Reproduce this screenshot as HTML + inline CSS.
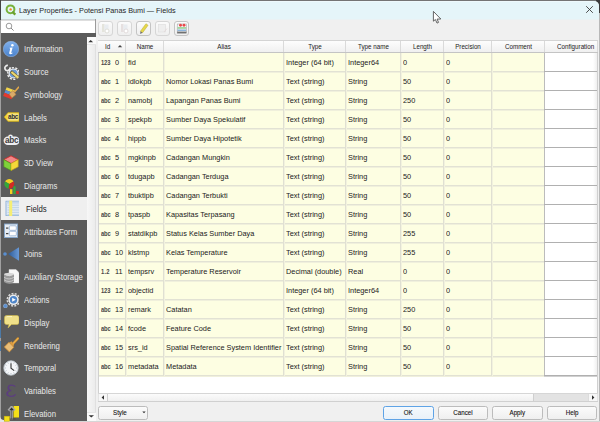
<!DOCTYPE html><html><head><meta charset="utf-8"><style>
*{margin:0;padding:0;box-sizing:border-box}
html,body{width:600px;height:422px;overflow:hidden;background:#3c3c3c;font-family:"Liberation Sans",sans-serif;}
.a{position:absolute}
.t{position:absolute;white-space:nowrap;font-size:7.4px;color:#1a1a1a;line-height:10px}
</style></head><body>

<div class="a" style="left:1px;top:1px;width:598px;height:421px;background:#f0f0f0;border-top-right-radius:5px;overflow:hidden">
</div>
<div class="a" style="left:1px;top:1px;width:598px;height:18px;background:#e5f5f9;border-top-right-radius:5px;border-top-left-radius:2px"></div>
<div class="t" style="left:19px;top:5.8px;font-size:7.9px;color:#262626;transform:scaleX(0.925);transform-origin:0 0">Layer Properties - Potensi Panas Bumi — Fields</div>
<div class="a" style="left:0px;top:0px;width:596px;height:1px;background:#747474"></div>
<div class="a" style="left:0px;top:0px;width:1px;height:20px;background:#444"></div>
<div class="a" style="left:2px;top:1px;width:592px;height:1px;background:#eef9fc"></div>
<div class="a" style="left:599px;top:13px;width:1px;height:409px;background:#b8b8b8"></div>
<div class="a" style="left:0px;top:20px;width:1px;height:402px;background:#a0a0a0"></div>
<div class="a" style="left:0px;top:320px;width:1px;height:18px;background:#4b79a6"></div>
<div class="a" style="left:0px;top:341px;width:1px;height:10px;background:#4b79a6"></div>
<svg class="a" style="left:585px;top:5px" width="9" height="9"><path d="M1.2 1.2L7.8 7.8M7.8 1.2L1.2 7.8" stroke="#3a3a3a" stroke-width="0.9"/></svg>
<svg class="a" style="left:5px;top:4px" width="12" height="12"><circle cx="5.5" cy="5.3" r="3.9" fill="none" stroke="#78b23c" stroke-width="2"/><path d="M7.3 7.6L10.3 10.6" stroke="#6aa02f" stroke-width="2.2"/><circle cx="5.6" cy="5.4" r="1.2" fill="#f08a24"/></svg>
<div class="a" style="left:96px;top:19px;width:503px;height:1px;background:#eaf2f4"></div>
<div class="a" style="left:1px;top:19px;width:95px;height:1px;background:#cdd3d6"></div>
<div class="a" style="left:1px;top:20px;width:95px;height:1px;background:#dedede"></div>
<div class="a" style="left:1px;top:21px;width:94px;height:12px;background:#fff"></div>
<div class="a" style="left:95px;top:19px;width:1px;height:14px;background:#9a9a9a"></div>
<svg class="a" style="left:5px;top:22px" width="10" height="10"><circle cx="4" cy="4" r="2.8" fill="none" stroke="#8a8a8a" stroke-width="0.85"/><path d="M6 6L8.6 8.6" stroke="#8a8a8a" stroke-width="1"/></svg>
<div class="a" style="left:1px;top:33px;width:94.5px;height:389px;background:#5b5b5b"></div>
<div class="a" style="left:87px;top:37px;width:9px;height:385px;background:linear-gradient(90deg,#f7f7f7,#ececec);border-right:1px solid #e0e0e0"></div>
<div class="a" style="left:87px;top:37px;width:8.5px;height:8px;background:#fafafa;border-bottom:1px solid #e6e6e6"></div>
<svg class="a" style="left:87px;top:38px" width="8" height="6"><path d="M1.3 4.2L3.7 2L6.1 4.2Z" fill="#333"/></svg>
<div class="a" style="left:87px;top:412px;width:8.5px;height:9px;background:#fafafa;border-top:1px solid #e6e6e6"></div>
<svg class="a" style="left:87px;top:414px" width="8" height="5"><path d="M1.6 1.2L4.3 3.4L7 1.2Z" fill="#333"/></svg>
<div class="a" style="left:0px;top:421px;width:600px;height:1px;background:#d6d6d6"></div>
<div class="a" style="left:0px;top:416px;width:4px;height:6px;background:radial-gradient(circle at 100% 0%, transparent 3.5px, #e4e4e4 4.5px)"></div>
<svg class="a" style="left:3px;top:40.8px" width="16" height="16" viewBox="0 0 16 16"><defs><linearGradient id="gi" x1="0" y1="0" x2="0" y2="1"><stop offset="0" stop-color="#80b0ec"/><stop offset="1" stop-color="#4a82cc"/></linearGradient></defs>
<circle cx="8" cy="8" r="7.7" fill="url(#gi)" stroke="#9cc0ee" stroke-width="0.5"/>
<circle cx="9.4" cy="4.2" r="1.25" fill="#fff"/>
<path d="M6.4 6.8L9.6 6.4L8.3 11.5Q8.2 12 8.8 11.9L9.6 11.5L9.4 12.4Q8.1 13.3 6.9 13.1Q5.9 12.8 6.2 11.7L7.2 8Z" fill="#fff"/></svg>
<div class="t" style="left:24px;top:45.2px;color:#e8e8e8;font-size:8.2px;transform:scaleX(0.95);transform-origin:0 0">Information</div>
<svg class="a" style="left:3px;top:63.6px" width="16" height="16" viewBox="0 0 16 16"><path d="M4.9 1.5A2.6 2.6 0 1 0 6.9 3.2" fill="none" stroke="#ececec" stroke-width="1.7"/>
<path d="M6.3 5.9L8.2 7.8" stroke="#ececec" stroke-width="1.8"/>
<circle cx="10.6" cy="9.5" r="5.9" fill="none" stroke="#f0f0f0" stroke-width="1.4" stroke-dasharray="2.2 1.4"/>
<circle cx="10.6" cy="9.5" r="5.1" fill="#f2f2f2"/>
<circle cx="10.6" cy="9.5" r="3.9" fill="#6a9ad4"/>
<path d="M7.8 7.5L15.2 13.7" stroke="#6a5a30" stroke-width="3.2"/>
<path d="M8.4 8L15.2 13.7" stroke="#ecd870" stroke-width="2.2"/></svg>
<div class="t" style="left:24px;top:68.0px;color:#e8e8e8;font-size:8.2px;transform:scaleX(0.95);transform-origin:0 0">Source</div>
<svg class="a" style="left:3px;top:86.4px" width="16" height="16" viewBox="0 0 16 16"><g transform="rotate(22 7 9)"><rect x="1" y="3" width="9" height="3" fill="#f1d44a"/><rect x="1" y="6" width="9" height="3" fill="#5a8fd0"/><rect x="1" y="9" width="9" height="3.5" fill="#e23a2e"/></g>
<path d="M6 8L10 4.5L13 8.5L9 12Z" fill="#d9aa6a" stroke="#b07a3a" stroke-width="0.6"/>
<path d="M11.5 6L16 0.8" stroke="#e3a84a" stroke-width="1.6"/></svg>
<div class="t" style="left:24px;top:90.8px;color:#e8e8e8;font-size:8.2px;transform:scaleX(0.95);transform-origin:0 0">Symbology</div>
<svg class="a" style="left:3px;top:109.2px" width="16" height="16" viewBox="0 0 16 16"><path d="M5 3.6H15.6Q16.3 3.6 16.3 4.3V11.7Q16.3 12.4 15.6 12.4H5L1.2 8Z" fill="#f3d437" stroke="#c9a818" stroke-width="0.6"/>
<rect x="4.6" y="4.6" width="10.8" height="6.8" rx="1" fill="#f2e286"/>
<text x="10.1" y="10.4" font-family="Liberation Sans" font-size="6.4" font-weight="bold" fill="#2e2e2e" text-anchor="middle" letter-spacing="-0.35">abc</text></svg>
<div class="t" style="left:24px;top:113.6px;color:#e8e8e8;font-size:8.2px;transform:scaleX(0.95);transform-origin:0 0">Labels</div>
<svg class="a" style="left:3px;top:132.0px" width="16" height="16" viewBox="0 0 16 16"><rect x="0.6" y="4.6" width="16" height="8.4" rx="4.2" fill="#ededf1"/>
<rect x="5.2" y="2.4" width="4.6" height="5" rx="2.3" fill="#ededf1"/>
<text x="8.6" y="11.3" font-family="Liberation Sans" font-size="8.2" font-weight="bold" fill="#3e3e3e" text-anchor="middle" letter-spacing="-0.3">abc</text></svg>
<div class="t" style="left:24px;top:136.4px;color:#e8e8e8;font-size:8.2px;transform:scaleX(0.95);transform-origin:0 0">Masks</div>
<svg class="a" style="left:3px;top:154.8px" width="16" height="16" viewBox="0 0 16 16"><path d="M8 0.8L15.2 4.6L8 8.6L0.8 4.6Z" fill="#f28888" stroke="#c92a2a" stroke-width="0.9"/>
<path d="M0.8 4.6L8 8.6V15.6L0.8 11.8Z" fill="#7ed23a" stroke="#4a8e1a" stroke-width="0.6"/>
<path d="M15.2 4.6L8 8.6V15.6L15.2 11.8Z" fill="#f4d83a" stroke="#c9a818" stroke-width="0.6"/></svg>
<div class="t" style="left:24px;top:159.2px;color:#e8e8e8;font-size:8.2px;transform:scaleX(0.95);transform-origin:0 0">3D View</div>
<svg class="a" style="left:3px;top:177.6px" width="16" height="16" viewBox="0 0 16 16"><path d="M6.3 5.9L2.06 3.45A4.9 4.9 0 0 1 10.54 3.45Z" fill="#f2cf22"/><path d="M6.3 5.9L10.54 3.45A4.9 4.9 0 0 1 5.45 10.73Z" fill="#d42a22"/><path d="M6.3 5.9L5.45 10.73A4.9 4.9 0 0 1 2.06 3.45Z" fill="#35a83a"/>
<rect x="7" y="11.2" width="2.4" height="6" fill="#f2cf22"/>
<rect x="10.4" y="8.3" width="2.2" height="8.9" fill="#35a83a"/>
<rect x="13.2" y="13" width="2.6" height="4.2" fill="#d42a22"/></svg>
<div class="t" style="left:24px;top:182.0px;color:#e8e8e8;font-size:8.2px;transform:scaleX(0.95);transform-origin:0 0">Diagrams</div>
<div class="a" style="left:1px;top:197.0px;width:86px;height:22.8px;background:#efefef"></div>
<svg class="a" style="left:3px;top:200.4px" width="16" height="16" viewBox="0 0 16 16"><rect x="3" y="1.2" width="15" height="14.6" fill="#dfe9f5" stroke="#7fa6d2" stroke-width="0.8"/>
<rect x="3.4" y="1.6" width="14.2" height="2" fill="#c4d6ec"/>
<path d="M4.5 5.2H17M4.5 7.6H17M4.5 10H17M4.5 12.4H17M4.5 14.6H17" stroke="#aac2de" stroke-width="0.6"/>
<rect x="6.2" y="0.6" width="3" height="15.6" fill="#f6ee74"/></svg>
<div class="t" style="left:26px;top:204.8px;color:#222;font-size:8.2px;transform:scaleX(0.95);transform-origin:0 0">Fields</div>
<svg class="a" style="left:3px;top:223.2px" width="16" height="16" viewBox="0 0 16 16"><rect x="1.5" y="1" width="13" height="13.5" fill="#e8edf3" stroke="#86a8cf" stroke-width="0.9"/>
<rect x="3" y="4.5" width="2.4" height="1.2" fill="#444"/><rect x="3" y="10" width="2.4" height="1.2" fill="#444"/>
<rect x="6.3" y="2.8" width="7" height="4.5" rx="1" fill="#fff" stroke="#86a8cf" stroke-width="0.7"/>
<rect x="6.3" y="8.3" width="7" height="4.5" rx="1" fill="#fff" stroke="#86a8cf" stroke-width="0.7"/></svg>
<div class="t" style="left:24px;top:227.6px;color:#e8e8e8;font-size:8.2px;transform:scaleX(0.95);transform-origin:0 0">Attributes Form</div>
<svg class="a" style="left:3px;top:246.0px" width="16" height="16" viewBox="0 0 16 16"><defs><linearGradient id="gj" x1="0" y1="0" x2="1" y2="0"><stop offset="0" stop-color="#2c5a98"/><stop offset="1" stop-color="#6c9cd8"/></linearGradient></defs>
<path d="M5 8L16.5 1V15Z" fill="url(#gj)"/><circle cx="2" cy="8" r="1.8" fill="#5a8fd0"/></svg>
<div class="t" style="left:24px;top:250.4px;color:#e8e8e8;font-size:8.2px;transform:scaleX(0.95);transform-origin:0 0">Joins</div>
<svg class="a" style="left:3px;top:268.8px" width="16" height="16" viewBox="0 0 16 16"><path d="M6 0.5H13L16 3.5V14H6Z" fill="#f8f8f8" stroke="#ddd" stroke-width="0.4"/>
<ellipse cx="6" cy="5.5" rx="5" ry="1.8" fill="#d8d8d8"/>
<path d="M1 5.5V13Q6 16.5 11 13V5.5Q6 9 1 5.5Z" fill="#9a9a9a"/>
<path d="M1 8.3Q6 11.6 11 8.3M1 10.8Q6 14.2 11 10.8" fill="none" stroke="#d2d2d2" stroke-width="0.8"/></svg>
<div class="t" style="left:24px;top:273.2px;color:#e8e8e8;font-size:8.2px;transform:scaleX(0.95);transform-origin:0 0">Auxiliary Storage</div>
<svg class="a" style="left:3px;top:291.6px" width="16" height="16" viewBox="0 0 16 16"><circle cx="10.5" cy="7.8" r="6.2" fill="none" stroke="#d8d8d8" stroke-width="1.6" stroke-dasharray="2 1.3"/>
<circle cx="10.5" cy="7.8" r="5.2" fill="#eeeeee"/>
<circle cx="10.5" cy="7.8" r="3.7" fill="#4f86c9"/>
<path d="M9.2 5.8L12.7 7.8L9.2 9.8Z" fill="#fff"/>
<circle cx="2.4" cy="14" r="2" fill="#5a8fd0" stroke="#a8c0e0" stroke-width="0.5"/></svg>
<div class="t" style="left:24px;top:296.0px;color:#e8e8e8;font-size:8.2px;transform:scaleX(0.95);transform-origin:0 0">Actions</div>
<svg class="a" style="left:3px;top:314.4px" width="16" height="16" viewBox="0 0 16 16"><path d="M3.5 1.5H14Q16 1.5 16 3.5V8.5Q16 10.5 14 10.5H8.5L5 14L6 10.5H3.5Q1.5 10.5 1.5 8.5V3.5Q1.5 1.5 3.5 1.5Z" fill="#efe08a" stroke="#cdb84a" stroke-width="0.6"/>
<path d="M3.5 3Q3.5 2.6 5 2.6H9" stroke="#fff8c8" stroke-width="1"/></svg>
<div class="t" style="left:24px;top:318.8px;color:#e8e8e8;font-size:8.2px;transform:scaleX(0.95);transform-origin:0 0">Display</div>
<svg class="a" style="left:3px;top:337.2px" width="16" height="16" viewBox="0 0 16 16"><path d="M9 7.8L15 1.4" stroke="#c98a2a" stroke-width="2.3" stroke-linecap="round"/>
<path d="M9 7.8L15 1.4" stroke="#eab050" stroke-width="1.3" stroke-linecap="round"/>
<path d="M1.3 10L6 5.2L10.8 10.2L6.4 14.9Z" fill="#e8bd78" stroke="#c98a34" stroke-width="0.8" stroke-linejoin="round"/>
<path d="M6.6 5.8L8.4 4.2L11.2 7.6L10.2 9.6Z" fill="#d99a40"/></svg>
<div class="t" style="left:24px;top:341.6px;color:#e8e8e8;font-size:8.2px;transform:scaleX(0.95);transform-origin:0 0">Rendering</div>
<svg class="a" style="left:3px;top:360.0px" width="16" height="16" viewBox="0 0 16 16"><circle cx="8" cy="8" r="7.2" fill="#f4f6f8" stroke="#c8d0d8" stroke-width="0.8"/>
<g stroke="#9aa4b0" stroke-width="0.7"><path d="M8 1.6V2.8M8 13.2V14.4M1.6 8H2.8M13.2 8H14.4M11.2 2.5L10.6 3.5M4.8 2.5L5.4 3.5M11.2 13.5L10.6 12.5M4.8 13.5L5.4 12.5M2.5 4.8L3.5 5.4M13.5 4.8L12.5 5.4M2.5 11.2L3.5 10.6M13.5 11.2L12.5 10.6"/></g>
<path d="M8 3.2V8.3L11.2 10.6" fill="none" stroke="#333" stroke-width="1.1"/></svg>
<div class="t" style="left:24px;top:364.4px;color:#e8e8e8;font-size:8.2px;transform:scaleX(0.95);transform-origin:0 0">Temporal</div>
<svg class="a" style="left:3px;top:382.8px" width="16" height="16" viewBox="0 0 16 16"><path d="M12.3 3.6Q11 2.2 8.6 2.2Q5.2 2.2 5.2 4.8Q5.2 7 8.2 7.6Q4 8 4 10.6Q4 13.4 8.4 13.4Q11.2 13.4 12.6 11.4" fill="none" stroke="#5c3d80" stroke-width="1.2"/>
<path d="M5.9 3.3Q4.9 5 5.9 6.6M4.9 9.2Q3.8 11 4.9 12.6" fill="none" stroke="#5c3d80" stroke-width="1.5"/></svg>
<div class="t" style="left:24px;top:387.2px;color:#e8e8e8;font-size:8.2px;transform:scaleX(0.95);transform-origin:0 0">Variables</div>
<svg class="a" style="left:3px;top:405.6px" width="16" height="16" viewBox="0 0 16 16"><g transform="translate(0 -1.6)">
<rect x="10.8" y="1.3" width="5.6" height="11.6" fill="#f4df1a" stroke="#c9b20a" stroke-width="0.5"/>
<rect x="1.2" y="11.8" width="5.4" height="5" fill="#f4df1a" stroke="#c9b20a" stroke-width="0.5"/>
<path d="M8.6 15V5.2M5.6 6.2L8.6 2.6L11.6 6.2" fill="none" stroke="#a8a8a8" stroke-width="2.6" stroke-linejoin="round"/>
<path d="M8.6 15V5.2" fill="none" stroke="#6a6a6a" stroke-width="1.1"/>
<path d="M6.2 5.9L8.6 3.2L11 5.9Z" fill="#2e2e2e"/>
<path d="M6.8 14.6H12.5" stroke="#444" stroke-width="0.7"/></g></svg>
<div class="t" style="left:24px;top:410.0px;color:#e8e8e8;font-size:8.2px;transform:scaleX(0.95);transform-origin:0 0">Elevation</div>
<div class="a" style="left:98.3px;top:21.3px;width:15px;height:14.5px;border:1px solid #d6d6d6;border-radius:3px;background:linear-gradient(#fbfbfb,#efefef)"></div>
<svg class="a" style="left:98.3px;top:21px" width="15" height="15" viewBox="0 0 15 15"><rect x="4" y="3" width="2.5" height="8" fill="#e4e4dc"/><rect x="6.5" y="3.5" width="4" height="6" fill="#e8ecf0"/><circle cx="9" cy="10" r="2" fill="#fff" stroke="#d8d8d0" stroke-width="0.8"/></svg>
<div class="a" style="left:117.2px;top:21.3px;width:15px;height:14.5px;border:1px solid #d6d6d6;border-radius:3px;background:linear-gradient(#fbfbfb,#efefef)"></div>
<svg class="a" style="left:117.2px;top:21px" width="15" height="15" viewBox="0 0 15 15"><rect x="4" y="3" width="2.5" height="8" fill="#e6e0e0"/><rect x="6.5" y="3.5" width="4" height="6" fill="#e8ecf0"/><circle cx="9" cy="10" r="2" fill="#fff" stroke="#dcd4d4" stroke-width="0.8"/></svg>
<div class="a" style="left:136.2px;top:21.3px;width:15px;height:14.5px;border:1px solid #c4c4c4;border-radius:3px;background:linear-gradient(#fbfbfb,#efefef)"></div>
<svg class="a" style="left:136.2px;top:21px" width="15" height="15" viewBox="0 0 15 15"><path d="M4.45 10.23L9.95 2.73L12.05 4.27L6.55 11.77Z" fill="#e6d84a" stroke="#b8a830" stroke-width="0.5"/><path d="M4.45 10.23L6.55 11.77L4.2 12.9Z" fill="#6a6a6a"/></svg>
<div class="a" style="left:155px;top:21.3px;width:15px;height:14.5px;border:1px solid #d6d6d6;border-radius:3px;background:linear-gradient(#fbfbfb,#efefef)"></div>
<svg class="a" style="left:155px;top:21px" width="15" height="15" viewBox="0 0 15 15"><rect x="3.5" y="3.5" width="7" height="7.5" fill="#eeeeee" stroke="#dddddd" stroke-width="0.6"/><path d="M9 11L12 7.5" stroke="#e2d6d6" stroke-width="0.8"/></svg>
<div class="a" style="left:174px;top:21.3px;width:15px;height:14.5px;border:1px solid #c4c4c4;border-radius:3px;background:linear-gradient(#fbfbfb,#efefef)"></div>
<svg class="a" style="left:174px;top:21px" width="15" height="15" viewBox="0 0 15 15"><rect x="3.2" y="3" width="9.2" height="9.2" fill="#f6f6f6" stroke="#9a9a9a" stroke-width="0.5"/><circle cx="6.5" cy="4.3" r="1.45" fill="#e8484a"/><circle cx="10" cy="4.3" r="1.45" fill="#e8484a"/><rect x="3.5" y="6.1" width="8.6" height="1.7" fill="#9ad49a"/><rect x="3.5" y="8.5" width="8.6" height="1.6" fill="#8cb4dc"/><rect x="3.2" y="10.6" width="9.2" height="1.6" fill="#707070"/></svg>
<div class="a" style="left:98px;top:40px;width:500px;height:362px;background:#fff;border:1px solid #d0d0d0;border-right:1px solid #d0d0d0"></div>
<div class="a" style="left:98px;top:40px;width:500px;height:13px;background:linear-gradient(#fdfdfd,#f0f0f0);border-top:1px solid #d4d4d4;border-bottom:1px solid #c4c4c4"></div>
<div class="a" style="left:125px;top:41px;width:1px;height:11px;background:#dadada"></div>
<div class="t" style="left:104.5px;top:42.2px;font-size:6.8px;color:#222;transform:scaleX(0.92);transform-origin:0 0">Id</div>
<div class="a" style="left:163px;top:41px;width:1px;height:11px;background:#dadada"></div>
<div class="t" style="left:126px;width:38px;text-align:center;top:42.2px;font-size:6.8px;color:#222;transform:scaleX(0.92);transform-origin:50% 0">Name</div>
<div class="a" style="left:283px;top:41px;width:1px;height:11px;background:#dadada"></div>
<div class="t" style="left:164px;width:120px;text-align:center;top:42.2px;font-size:6.8px;color:#222;transform:scaleX(0.92);transform-origin:50% 0">Alias</div>
<div class="a" style="left:345px;top:41px;width:1px;height:11px;background:#dadada"></div>
<div class="t" style="left:284px;width:62px;text-align:center;top:42.2px;font-size:6.8px;color:#222;transform:scaleX(0.92);transform-origin:50% 0">Type</div>
<div class="a" style="left:400px;top:41px;width:1px;height:11px;background:#dadada"></div>
<div class="t" style="left:346px;width:55px;text-align:center;top:42.2px;font-size:6.8px;color:#222;transform:scaleX(0.92);transform-origin:50% 0">Type name</div>
<div class="a" style="left:443px;top:41px;width:1px;height:11px;background:#dadada"></div>
<div class="t" style="left:401px;width:43px;text-align:center;top:42.2px;font-size:6.8px;color:#222;transform:scaleX(0.92);transform-origin:50% 0">Length</div>
<div class="a" style="left:491px;top:41px;width:1px;height:11px;background:#dadada"></div>
<div class="t" style="left:444px;width:48px;text-align:center;top:42.2px;font-size:6.8px;color:#222;transform:scaleX(0.92);transform-origin:50% 0">Precision</div>
<div class="a" style="left:544px;top:41px;width:1px;height:11px;background:#dadada"></div>
<div class="t" style="left:492px;width:53px;text-align:center;top:42.2px;font-size:6.8px;color:#222;transform:scaleX(0.92);transform-origin:50% 0">Comment</div>
<div class="a" style="left:597px;top:41px;width:1px;height:11px;background:#dadada"></div>
<div class="t" style="left:557px;top:42.2px;font-size:6.8px;color:#222;transform:scaleX(0.92);transform-origin:0 0">Configuration</div>
<svg class="a" style="left:117px;top:44px" width="6" height="4"><path d="M0.8 3.2L3 1L5.2 3.2Z" fill="#444"/></svg>
<div class="a" style="left:99px;top:53px;width:498px;height:323px;background:#fdfee2"></div>
<div class="a" style="left:99px;top:71px;width:445px;height:1px;background:#e2e2d4"></div>
<div class="a" style="left:99px;top:72px;width:445px;height:1px;background:#f0f0dc"></div>
<div class="t" style="left:100.8px;top:57.5px;font-size:6.3px;font-weight:bold;color:#484848;letter-spacing:-0.15px;transform:scaleX(0.92);transform-origin:0 0">123</div>
<div class="t" style="left:114.8px;top:58.1px;font-size:8px;transform:scaleX(0.92);transform-origin:0 0">0</div>
<div class="t" style="left:127.8px;top:58.1px;font-size:8px;transform:scaleX(0.92);transform-origin:0 0">fid</div>
<div class="t" style="left:165.8px;top:58.1px;font-size:8px;transform:scaleX(0.92);transform-origin:0 0"></div>
<div class="t" style="left:285.8px;top:58.1px;font-size:8px;transform:scaleX(0.92);transform-origin:0 0">Integer (64 bit)</div>
<div class="t" style="left:347.8px;top:58.1px;font-size:8px;transform:scaleX(0.92);transform-origin:0 0">Integer64</div>
<div class="t" style="left:402.8px;top:58.1px;font-size:8px;transform:scaleX(0.92);transform-origin:0 0">0</div>
<div class="t" style="left:445.8px;top:58.1px;font-size:8px;transform:scaleX(0.92);transform-origin:0 0">0</div>
<div class="a" style="left:544px;top:53px;width:53px;height:18px;background:linear-gradient(90deg,#fff 0,#fff 48px,#ececec 53px);border-left:1px solid #bcbcbc"></div>
<div class="a" style="left:544px;top:71px;width:53px;height:1px;background:#b0b0b0"></div>
<div class="a" style="left:544px;top:72px;width:53px;height:1px;background:#d0d0d0"></div>
<div class="a" style="left:99px;top:90px;width:445px;height:1px;background:#e2e2d4"></div>
<div class="a" style="left:99px;top:91px;width:445px;height:1px;background:#f0f0dc"></div>
<div class="t" style="left:100.8px;top:76.5px;font-size:6.3px;font-weight:bold;color:#484848;letter-spacing:-0.15px;transform:scaleX(0.92);transform-origin:0 0">abc</div>
<div class="t" style="left:114.8px;top:77.1px;font-size:8px;transform:scaleX(0.92);transform-origin:0 0">1</div>
<div class="t" style="left:127.8px;top:77.1px;font-size:8px;transform:scaleX(0.92);transform-origin:0 0">idlokpb</div>
<div class="t" style="left:165.8px;top:77.1px;font-size:8px;transform:scaleX(0.92);transform-origin:0 0">Nomor Lokasi Panas Bumi</div>
<div class="t" style="left:285.8px;top:77.1px;font-size:8px;transform:scaleX(0.92);transform-origin:0 0">Text (string)</div>
<div class="t" style="left:347.8px;top:77.1px;font-size:8px;transform:scaleX(0.92);transform-origin:0 0">String</div>
<div class="t" style="left:402.8px;top:77.1px;font-size:8px;transform:scaleX(0.92);transform-origin:0 0">50</div>
<div class="t" style="left:445.8px;top:77.1px;font-size:8px;transform:scaleX(0.92);transform-origin:0 0">0</div>
<div class="a" style="left:544px;top:72px;width:53px;height:18px;background:linear-gradient(90deg,#fff 0,#fff 48px,#ececec 53px);border-left:1px solid #bcbcbc"></div>
<div class="a" style="left:544px;top:90px;width:53px;height:1px;background:#b0b0b0"></div>
<div class="a" style="left:544px;top:91px;width:53px;height:1px;background:#d0d0d0"></div>
<div class="a" style="left:99px;top:109px;width:445px;height:1px;background:#e2e2d4"></div>
<div class="a" style="left:99px;top:110px;width:445px;height:1px;background:#f0f0dc"></div>
<div class="t" style="left:100.8px;top:95.5px;font-size:6.3px;font-weight:bold;color:#484848;letter-spacing:-0.15px;transform:scaleX(0.92);transform-origin:0 0">abc</div>
<div class="t" style="left:114.8px;top:96.1px;font-size:8px;transform:scaleX(0.92);transform-origin:0 0">2</div>
<div class="t" style="left:127.8px;top:96.1px;font-size:8px;transform:scaleX(0.92);transform-origin:0 0">namobj</div>
<div class="t" style="left:165.8px;top:96.1px;font-size:8px;transform:scaleX(0.92);transform-origin:0 0">Lapangan Panas Bumi</div>
<div class="t" style="left:285.8px;top:96.1px;font-size:8px;transform:scaleX(0.92);transform-origin:0 0">Text (string)</div>
<div class="t" style="left:347.8px;top:96.1px;font-size:8px;transform:scaleX(0.92);transform-origin:0 0">String</div>
<div class="t" style="left:402.8px;top:96.1px;font-size:8px;transform:scaleX(0.92);transform-origin:0 0">250</div>
<div class="t" style="left:445.8px;top:96.1px;font-size:8px;transform:scaleX(0.92);transform-origin:0 0">0</div>
<div class="a" style="left:544px;top:91px;width:53px;height:18px;background:linear-gradient(90deg,#fff 0,#fff 48px,#ececec 53px);border-left:1px solid #bcbcbc"></div>
<div class="a" style="left:544px;top:109px;width:53px;height:1px;background:#b0b0b0"></div>
<div class="a" style="left:544px;top:110px;width:53px;height:1px;background:#d0d0d0"></div>
<div class="a" style="left:99px;top:128px;width:445px;height:1px;background:#e2e2d4"></div>
<div class="a" style="left:99px;top:129px;width:445px;height:1px;background:#f0f0dc"></div>
<div class="t" style="left:100.8px;top:114.5px;font-size:6.3px;font-weight:bold;color:#484848;letter-spacing:-0.15px;transform:scaleX(0.92);transform-origin:0 0">abc</div>
<div class="t" style="left:114.8px;top:115.1px;font-size:8px;transform:scaleX(0.92);transform-origin:0 0">3</div>
<div class="t" style="left:127.8px;top:115.1px;font-size:8px;transform:scaleX(0.92);transform-origin:0 0">spekpb</div>
<div class="t" style="left:165.8px;top:115.1px;font-size:8px;transform:scaleX(0.92);transform-origin:0 0">Sumber Daya Spekulatif</div>
<div class="t" style="left:285.8px;top:115.1px;font-size:8px;transform:scaleX(0.92);transform-origin:0 0">Text (string)</div>
<div class="t" style="left:347.8px;top:115.1px;font-size:8px;transform:scaleX(0.92);transform-origin:0 0">String</div>
<div class="t" style="left:402.8px;top:115.1px;font-size:8px;transform:scaleX(0.92);transform-origin:0 0">50</div>
<div class="t" style="left:445.8px;top:115.1px;font-size:8px;transform:scaleX(0.92);transform-origin:0 0">0</div>
<div class="a" style="left:544px;top:110px;width:53px;height:18px;background:linear-gradient(90deg,#fff 0,#fff 48px,#ececec 53px);border-left:1px solid #bcbcbc"></div>
<div class="a" style="left:544px;top:128px;width:53px;height:1px;background:#b0b0b0"></div>
<div class="a" style="left:544px;top:129px;width:53px;height:1px;background:#d0d0d0"></div>
<div class="a" style="left:99px;top:147px;width:445px;height:1px;background:#e2e2d4"></div>
<div class="a" style="left:99px;top:148px;width:445px;height:1px;background:#f0f0dc"></div>
<div class="t" style="left:100.8px;top:133.5px;font-size:6.3px;font-weight:bold;color:#484848;letter-spacing:-0.15px;transform:scaleX(0.92);transform-origin:0 0">abc</div>
<div class="t" style="left:114.8px;top:134.1px;font-size:8px;transform:scaleX(0.92);transform-origin:0 0">4</div>
<div class="t" style="left:127.8px;top:134.1px;font-size:8px;transform:scaleX(0.92);transform-origin:0 0">hippb</div>
<div class="t" style="left:165.8px;top:134.1px;font-size:8px;transform:scaleX(0.92);transform-origin:0 0">Sumber Daya Hipotetik</div>
<div class="t" style="left:285.8px;top:134.1px;font-size:8px;transform:scaleX(0.92);transform-origin:0 0">Text (string)</div>
<div class="t" style="left:347.8px;top:134.1px;font-size:8px;transform:scaleX(0.92);transform-origin:0 0">String</div>
<div class="t" style="left:402.8px;top:134.1px;font-size:8px;transform:scaleX(0.92);transform-origin:0 0">50</div>
<div class="t" style="left:445.8px;top:134.1px;font-size:8px;transform:scaleX(0.92);transform-origin:0 0">0</div>
<div class="a" style="left:544px;top:129px;width:53px;height:18px;background:linear-gradient(90deg,#fff 0,#fff 48px,#ececec 53px);border-left:1px solid #bcbcbc"></div>
<div class="a" style="left:544px;top:147px;width:53px;height:1px;background:#b0b0b0"></div>
<div class="a" style="left:544px;top:148px;width:53px;height:1px;background:#d0d0d0"></div>
<div class="a" style="left:99px;top:166px;width:445px;height:1px;background:#e2e2d4"></div>
<div class="a" style="left:99px;top:167px;width:445px;height:1px;background:#f0f0dc"></div>
<div class="t" style="left:100.8px;top:152.5px;font-size:6.3px;font-weight:bold;color:#484848;letter-spacing:-0.15px;transform:scaleX(0.92);transform-origin:0 0">abc</div>
<div class="t" style="left:114.8px;top:153.1px;font-size:8px;transform:scaleX(0.92);transform-origin:0 0">5</div>
<div class="t" style="left:127.8px;top:153.1px;font-size:8px;transform:scaleX(0.92);transform-origin:0 0">mgkinpb</div>
<div class="t" style="left:165.8px;top:153.1px;font-size:8px;transform:scaleX(0.92);transform-origin:0 0">Cadangan Mungkin</div>
<div class="t" style="left:285.8px;top:153.1px;font-size:8px;transform:scaleX(0.92);transform-origin:0 0">Text (string)</div>
<div class="t" style="left:347.8px;top:153.1px;font-size:8px;transform:scaleX(0.92);transform-origin:0 0">String</div>
<div class="t" style="left:402.8px;top:153.1px;font-size:8px;transform:scaleX(0.92);transform-origin:0 0">50</div>
<div class="t" style="left:445.8px;top:153.1px;font-size:8px;transform:scaleX(0.92);transform-origin:0 0">0</div>
<div class="a" style="left:544px;top:148px;width:53px;height:18px;background:linear-gradient(90deg,#fff 0,#fff 48px,#ececec 53px);border-left:1px solid #bcbcbc"></div>
<div class="a" style="left:544px;top:166px;width:53px;height:1px;background:#b0b0b0"></div>
<div class="a" style="left:544px;top:167px;width:53px;height:1px;background:#d0d0d0"></div>
<div class="a" style="left:99px;top:185px;width:445px;height:1px;background:#e2e2d4"></div>
<div class="a" style="left:99px;top:186px;width:445px;height:1px;background:#f0f0dc"></div>
<div class="t" style="left:100.8px;top:171.5px;font-size:6.3px;font-weight:bold;color:#484848;letter-spacing:-0.15px;transform:scaleX(0.92);transform-origin:0 0">abc</div>
<div class="t" style="left:114.8px;top:172.1px;font-size:8px;transform:scaleX(0.92);transform-origin:0 0">6</div>
<div class="t" style="left:127.8px;top:172.1px;font-size:8px;transform:scaleX(0.92);transform-origin:0 0">tdugapb</div>
<div class="t" style="left:165.8px;top:172.1px;font-size:8px;transform:scaleX(0.92);transform-origin:0 0">Cadangan Terduga</div>
<div class="t" style="left:285.8px;top:172.1px;font-size:8px;transform:scaleX(0.92);transform-origin:0 0">Text (string)</div>
<div class="t" style="left:347.8px;top:172.1px;font-size:8px;transform:scaleX(0.92);transform-origin:0 0">String</div>
<div class="t" style="left:402.8px;top:172.1px;font-size:8px;transform:scaleX(0.92);transform-origin:0 0">50</div>
<div class="t" style="left:445.8px;top:172.1px;font-size:8px;transform:scaleX(0.92);transform-origin:0 0">0</div>
<div class="a" style="left:544px;top:167px;width:53px;height:18px;background:linear-gradient(90deg,#fff 0,#fff 48px,#ececec 53px);border-left:1px solid #bcbcbc"></div>
<div class="a" style="left:544px;top:185px;width:53px;height:1px;background:#b0b0b0"></div>
<div class="a" style="left:544px;top:186px;width:53px;height:1px;background:#d0d0d0"></div>
<div class="a" style="left:99px;top:204px;width:445px;height:1px;background:#e2e2d4"></div>
<div class="a" style="left:99px;top:205px;width:445px;height:1px;background:#f0f0dc"></div>
<div class="t" style="left:100.8px;top:190.5px;font-size:6.3px;font-weight:bold;color:#484848;letter-spacing:-0.15px;transform:scaleX(0.92);transform-origin:0 0">abc</div>
<div class="t" style="left:114.8px;top:191.1px;font-size:8px;transform:scaleX(0.92);transform-origin:0 0">7</div>
<div class="t" style="left:127.8px;top:191.1px;font-size:8px;transform:scaleX(0.92);transform-origin:0 0">tbuktipb</div>
<div class="t" style="left:165.8px;top:191.1px;font-size:8px;transform:scaleX(0.92);transform-origin:0 0">Cadangan Terbukti</div>
<div class="t" style="left:285.8px;top:191.1px;font-size:8px;transform:scaleX(0.92);transform-origin:0 0">Text (string)</div>
<div class="t" style="left:347.8px;top:191.1px;font-size:8px;transform:scaleX(0.92);transform-origin:0 0">String</div>
<div class="t" style="left:402.8px;top:191.1px;font-size:8px;transform:scaleX(0.92);transform-origin:0 0">50</div>
<div class="t" style="left:445.8px;top:191.1px;font-size:8px;transform:scaleX(0.92);transform-origin:0 0">0</div>
<div class="a" style="left:544px;top:186px;width:53px;height:18px;background:linear-gradient(90deg,#fff 0,#fff 48px,#ececec 53px);border-left:1px solid #bcbcbc"></div>
<div class="a" style="left:544px;top:204px;width:53px;height:1px;background:#b0b0b0"></div>
<div class="a" style="left:544px;top:205px;width:53px;height:1px;background:#d0d0d0"></div>
<div class="a" style="left:99px;top:223px;width:445px;height:1px;background:#e2e2d4"></div>
<div class="a" style="left:99px;top:224px;width:445px;height:1px;background:#f0f0dc"></div>
<div class="t" style="left:100.8px;top:209.5px;font-size:6.3px;font-weight:bold;color:#484848;letter-spacing:-0.15px;transform:scaleX(0.92);transform-origin:0 0">abc</div>
<div class="t" style="left:114.8px;top:210.1px;font-size:8px;transform:scaleX(0.92);transform-origin:0 0">8</div>
<div class="t" style="left:127.8px;top:210.1px;font-size:8px;transform:scaleX(0.92);transform-origin:0 0">tpaspb</div>
<div class="t" style="left:165.8px;top:210.1px;font-size:8px;transform:scaleX(0.92);transform-origin:0 0">Kapasitas Terpasang</div>
<div class="t" style="left:285.8px;top:210.1px;font-size:8px;transform:scaleX(0.92);transform-origin:0 0">Text (string)</div>
<div class="t" style="left:347.8px;top:210.1px;font-size:8px;transform:scaleX(0.92);transform-origin:0 0">String</div>
<div class="t" style="left:402.8px;top:210.1px;font-size:8px;transform:scaleX(0.92);transform-origin:0 0">50</div>
<div class="t" style="left:445.8px;top:210.1px;font-size:8px;transform:scaleX(0.92);transform-origin:0 0">0</div>
<div class="a" style="left:544px;top:205px;width:53px;height:18px;background:linear-gradient(90deg,#fff 0,#fff 48px,#ececec 53px);border-left:1px solid #bcbcbc"></div>
<div class="a" style="left:544px;top:223px;width:53px;height:1px;background:#b0b0b0"></div>
<div class="a" style="left:544px;top:224px;width:53px;height:1px;background:#d0d0d0"></div>
<div class="a" style="left:99px;top:242px;width:445px;height:1px;background:#e2e2d4"></div>
<div class="a" style="left:99px;top:243px;width:445px;height:1px;background:#f0f0dc"></div>
<div class="t" style="left:100.8px;top:228.5px;font-size:6.3px;font-weight:bold;color:#484848;letter-spacing:-0.15px;transform:scaleX(0.92);transform-origin:0 0">abc</div>
<div class="t" style="left:114.8px;top:229.1px;font-size:8px;transform:scaleX(0.92);transform-origin:0 0">9</div>
<div class="t" style="left:127.8px;top:229.1px;font-size:8px;transform:scaleX(0.92);transform-origin:0 0">statdikpb</div>
<div class="t" style="left:165.8px;top:229.1px;font-size:8px;transform:scaleX(0.92);transform-origin:0 0">Status Kelas Sumber Daya</div>
<div class="t" style="left:285.8px;top:229.1px;font-size:8px;transform:scaleX(0.92);transform-origin:0 0">Text (string)</div>
<div class="t" style="left:347.8px;top:229.1px;font-size:8px;transform:scaleX(0.92);transform-origin:0 0">String</div>
<div class="t" style="left:402.8px;top:229.1px;font-size:8px;transform:scaleX(0.92);transform-origin:0 0">255</div>
<div class="t" style="left:445.8px;top:229.1px;font-size:8px;transform:scaleX(0.92);transform-origin:0 0">0</div>
<div class="a" style="left:544px;top:224px;width:53px;height:18px;background:linear-gradient(90deg,#fff 0,#fff 48px,#ececec 53px);border-left:1px solid #bcbcbc"></div>
<div class="a" style="left:544px;top:242px;width:53px;height:1px;background:#b0b0b0"></div>
<div class="a" style="left:544px;top:243px;width:53px;height:1px;background:#d0d0d0"></div>
<div class="a" style="left:99px;top:261px;width:445px;height:1px;background:#e2e2d4"></div>
<div class="a" style="left:99px;top:262px;width:445px;height:1px;background:#f0f0dc"></div>
<div class="t" style="left:100.8px;top:247.5px;font-size:6.3px;font-weight:bold;color:#484848;letter-spacing:-0.15px;transform:scaleX(0.92);transform-origin:0 0">abc</div>
<div class="t" style="left:114.8px;top:248.1px;font-size:8px;transform:scaleX(0.92);transform-origin:0 0">10</div>
<div class="t" style="left:127.8px;top:248.1px;font-size:8px;transform:scaleX(0.92);transform-origin:0 0">klstmp</div>
<div class="t" style="left:165.8px;top:248.1px;font-size:8px;transform:scaleX(0.92);transform-origin:0 0">Kelas Temperature</div>
<div class="t" style="left:285.8px;top:248.1px;font-size:8px;transform:scaleX(0.92);transform-origin:0 0">Text (string)</div>
<div class="t" style="left:347.8px;top:248.1px;font-size:8px;transform:scaleX(0.92);transform-origin:0 0">String</div>
<div class="t" style="left:402.8px;top:248.1px;font-size:8px;transform:scaleX(0.92);transform-origin:0 0">255</div>
<div class="t" style="left:445.8px;top:248.1px;font-size:8px;transform:scaleX(0.92);transform-origin:0 0">0</div>
<div class="a" style="left:544px;top:243px;width:53px;height:18px;background:linear-gradient(90deg,#fff 0,#fff 48px,#ececec 53px);border-left:1px solid #bcbcbc"></div>
<div class="a" style="left:544px;top:261px;width:53px;height:1px;background:#b0b0b0"></div>
<div class="a" style="left:544px;top:262px;width:53px;height:1px;background:#d0d0d0"></div>
<div class="a" style="left:99px;top:280px;width:445px;height:1px;background:#e2e2d4"></div>
<div class="a" style="left:99px;top:281px;width:445px;height:1px;background:#f0f0dc"></div>
<div class="t" style="left:100.8px;top:266.5px;font-size:6.3px;font-weight:bold;color:#484848;letter-spacing:0.25px;transform:scaleX(0.92);transform-origin:0 0">1.2</div>
<div class="t" style="left:114.8px;top:267.1px;font-size:8px;transform:scaleX(0.92);transform-origin:0 0">11</div>
<div class="t" style="left:127.8px;top:267.1px;font-size:8px;transform:scaleX(0.92);transform-origin:0 0">tempsrv</div>
<div class="t" style="left:165.8px;top:267.1px;font-size:8px;transform:scaleX(0.92);transform-origin:0 0">Temperature Reservoir</div>
<div class="t" style="left:285.8px;top:267.1px;font-size:8px;transform:scaleX(0.92);transform-origin:0 0">Decimal (double)</div>
<div class="t" style="left:347.8px;top:267.1px;font-size:8px;transform:scaleX(0.92);transform-origin:0 0">Real</div>
<div class="t" style="left:402.8px;top:267.1px;font-size:8px;transform:scaleX(0.92);transform-origin:0 0">0</div>
<div class="t" style="left:445.8px;top:267.1px;font-size:8px;transform:scaleX(0.92);transform-origin:0 0">0</div>
<div class="a" style="left:544px;top:262px;width:53px;height:18px;background:linear-gradient(90deg,#fff 0,#fff 48px,#ececec 53px);border-left:1px solid #bcbcbc"></div>
<div class="a" style="left:544px;top:280px;width:53px;height:1px;background:#b0b0b0"></div>
<div class="a" style="left:544px;top:281px;width:53px;height:1px;background:#d0d0d0"></div>
<div class="a" style="left:99px;top:299px;width:445px;height:1px;background:#e2e2d4"></div>
<div class="a" style="left:99px;top:300px;width:445px;height:1px;background:#f0f0dc"></div>
<div class="t" style="left:100.8px;top:285.5px;font-size:6.3px;font-weight:bold;color:#484848;letter-spacing:-0.15px;transform:scaleX(0.92);transform-origin:0 0">123</div>
<div class="t" style="left:114.8px;top:286.1px;font-size:8px;transform:scaleX(0.92);transform-origin:0 0">12</div>
<div class="t" style="left:127.8px;top:286.1px;font-size:8px;transform:scaleX(0.92);transform-origin:0 0">objectid</div>
<div class="t" style="left:165.8px;top:286.1px;font-size:8px;transform:scaleX(0.92);transform-origin:0 0"></div>
<div class="t" style="left:285.8px;top:286.1px;font-size:8px;transform:scaleX(0.92);transform-origin:0 0">Integer (64 bit)</div>
<div class="t" style="left:347.8px;top:286.1px;font-size:8px;transform:scaleX(0.92);transform-origin:0 0">Integer64</div>
<div class="t" style="left:402.8px;top:286.1px;font-size:8px;transform:scaleX(0.92);transform-origin:0 0">0</div>
<div class="t" style="left:445.8px;top:286.1px;font-size:8px;transform:scaleX(0.92);transform-origin:0 0">0</div>
<div class="a" style="left:544px;top:281px;width:53px;height:18px;background:linear-gradient(90deg,#fff 0,#fff 48px,#ececec 53px);border-left:1px solid #bcbcbc"></div>
<div class="a" style="left:544px;top:299px;width:53px;height:1px;background:#b0b0b0"></div>
<div class="a" style="left:544px;top:300px;width:53px;height:1px;background:#d0d0d0"></div>
<div class="a" style="left:99px;top:318px;width:445px;height:1px;background:#e2e2d4"></div>
<div class="a" style="left:99px;top:319px;width:445px;height:1px;background:#f0f0dc"></div>
<div class="t" style="left:100.8px;top:304.5px;font-size:6.3px;font-weight:bold;color:#484848;letter-spacing:-0.15px;transform:scaleX(0.92);transform-origin:0 0">abc</div>
<div class="t" style="left:114.8px;top:305.1px;font-size:8px;transform:scaleX(0.92);transform-origin:0 0">13</div>
<div class="t" style="left:127.8px;top:305.1px;font-size:8px;transform:scaleX(0.92);transform-origin:0 0">remark</div>
<div class="t" style="left:165.8px;top:305.1px;font-size:8px;transform:scaleX(0.92);transform-origin:0 0">Catatan</div>
<div class="t" style="left:285.8px;top:305.1px;font-size:8px;transform:scaleX(0.92);transform-origin:0 0">Text (string)</div>
<div class="t" style="left:347.8px;top:305.1px;font-size:8px;transform:scaleX(0.92);transform-origin:0 0">String</div>
<div class="t" style="left:402.8px;top:305.1px;font-size:8px;transform:scaleX(0.92);transform-origin:0 0">250</div>
<div class="t" style="left:445.8px;top:305.1px;font-size:8px;transform:scaleX(0.92);transform-origin:0 0">0</div>
<div class="a" style="left:544px;top:300px;width:53px;height:18px;background:linear-gradient(90deg,#fff 0,#fff 48px,#ececec 53px);border-left:1px solid #bcbcbc"></div>
<div class="a" style="left:544px;top:318px;width:53px;height:1px;background:#b0b0b0"></div>
<div class="a" style="left:544px;top:319px;width:53px;height:1px;background:#d0d0d0"></div>
<div class="a" style="left:99px;top:337px;width:445px;height:1px;background:#e2e2d4"></div>
<div class="a" style="left:99px;top:338px;width:445px;height:1px;background:#f0f0dc"></div>
<div class="t" style="left:100.8px;top:323.5px;font-size:6.3px;font-weight:bold;color:#484848;letter-spacing:-0.15px;transform:scaleX(0.92);transform-origin:0 0">abc</div>
<div class="t" style="left:114.8px;top:324.1px;font-size:8px;transform:scaleX(0.92);transform-origin:0 0">14</div>
<div class="t" style="left:127.8px;top:324.1px;font-size:8px;transform:scaleX(0.92);transform-origin:0 0">fcode</div>
<div class="t" style="left:165.8px;top:324.1px;font-size:8px;transform:scaleX(0.92);transform-origin:0 0">Feature Code</div>
<div class="t" style="left:285.8px;top:324.1px;font-size:8px;transform:scaleX(0.92);transform-origin:0 0">Text (string)</div>
<div class="t" style="left:347.8px;top:324.1px;font-size:8px;transform:scaleX(0.92);transform-origin:0 0">String</div>
<div class="t" style="left:402.8px;top:324.1px;font-size:8px;transform:scaleX(0.92);transform-origin:0 0">50</div>
<div class="t" style="left:445.8px;top:324.1px;font-size:8px;transform:scaleX(0.92);transform-origin:0 0">0</div>
<div class="a" style="left:544px;top:319px;width:53px;height:18px;background:linear-gradient(90deg,#fff 0,#fff 48px,#ececec 53px);border-left:1px solid #bcbcbc"></div>
<div class="a" style="left:544px;top:337px;width:53px;height:1px;background:#b0b0b0"></div>
<div class="a" style="left:544px;top:338px;width:53px;height:1px;background:#d0d0d0"></div>
<div class="a" style="left:99px;top:356px;width:445px;height:1px;background:#e2e2d4"></div>
<div class="a" style="left:99px;top:357px;width:445px;height:1px;background:#f0f0dc"></div>
<div class="t" style="left:100.8px;top:342.5px;font-size:6.3px;font-weight:bold;color:#484848;letter-spacing:-0.15px;transform:scaleX(0.92);transform-origin:0 0">abc</div>
<div class="t" style="left:114.8px;top:343.1px;font-size:8px;transform:scaleX(0.92);transform-origin:0 0">15</div>
<div class="t" style="left:127.8px;top:343.1px;font-size:8px;transform:scaleX(0.92);transform-origin:0 0">srs_id</div>
<div class="t" style="left:165.8px;top:343.1px;font-size:8px;transform:scaleX(0.92);transform-origin:0 0">Spatial Reference System Identifier</div>
<div class="t" style="left:285.8px;top:343.1px;font-size:8px;transform:scaleX(0.92);transform-origin:0 0">Text (string)</div>
<div class="t" style="left:347.8px;top:343.1px;font-size:8px;transform:scaleX(0.92);transform-origin:0 0">String</div>
<div class="t" style="left:402.8px;top:343.1px;font-size:8px;transform:scaleX(0.92);transform-origin:0 0">50</div>
<div class="t" style="left:445.8px;top:343.1px;font-size:8px;transform:scaleX(0.92);transform-origin:0 0">0</div>
<div class="a" style="left:544px;top:338px;width:53px;height:18px;background:linear-gradient(90deg,#fff 0,#fff 48px,#ececec 53px);border-left:1px solid #bcbcbc"></div>
<div class="a" style="left:544px;top:356px;width:53px;height:1px;background:#b0b0b0"></div>
<div class="a" style="left:544px;top:357px;width:53px;height:1px;background:#d0d0d0"></div>
<div class="a" style="left:99px;top:375px;width:445px;height:1px;background:#e2e2d4"></div>
<div class="a" style="left:99px;top:376px;width:445px;height:1px;background:#f0f0dc"></div>
<div class="t" style="left:100.8px;top:361.5px;font-size:6.3px;font-weight:bold;color:#484848;letter-spacing:-0.15px;transform:scaleX(0.92);transform-origin:0 0">abc</div>
<div class="t" style="left:114.8px;top:362.1px;font-size:8px;transform:scaleX(0.92);transform-origin:0 0">16</div>
<div class="t" style="left:127.8px;top:362.1px;font-size:8px;transform:scaleX(0.92);transform-origin:0 0">metadata</div>
<div class="t" style="left:165.8px;top:362.1px;font-size:8px;transform:scaleX(0.92);transform-origin:0 0">Metadata</div>
<div class="t" style="left:285.8px;top:362.1px;font-size:8px;transform:scaleX(0.92);transform-origin:0 0">Text (string)</div>
<div class="t" style="left:347.8px;top:362.1px;font-size:8px;transform:scaleX(0.92);transform-origin:0 0">String</div>
<div class="t" style="left:402.8px;top:362.1px;font-size:8px;transform:scaleX(0.92);transform-origin:0 0">50</div>
<div class="t" style="left:445.8px;top:362.1px;font-size:8px;transform:scaleX(0.92);transform-origin:0 0">0</div>
<div class="a" style="left:544px;top:357px;width:53px;height:18px;background:linear-gradient(90deg,#fff 0,#fff 48px,#ececec 53px);border-left:1px solid #bcbcbc"></div>
<div class="a" style="left:544px;top:375px;width:53px;height:1px;background:#b0b0b0"></div>
<div class="a" style="left:544px;top:376px;width:53px;height:1px;background:#d0d0d0"></div>
<div class="a" style="left:125px;top:53px;width:1px;height:323px;background:#e0e0d2"></div>
<div class="a" style="left:126px;top:53px;width:1px;height:323px;background:#f2f2de"></div>
<div class="a" style="left:163px;top:53px;width:1px;height:323px;background:#e0e0d2"></div>
<div class="a" style="left:164px;top:53px;width:1px;height:323px;background:#f2f2de"></div>
<div class="a" style="left:283px;top:53px;width:1px;height:323px;background:#e0e0d2"></div>
<div class="a" style="left:284px;top:53px;width:1px;height:323px;background:#f2f2de"></div>
<div class="a" style="left:345px;top:53px;width:1px;height:323px;background:#e0e0d2"></div>
<div class="a" style="left:346px;top:53px;width:1px;height:323px;background:#f2f2de"></div>
<div class="a" style="left:400px;top:53px;width:1px;height:323px;background:#e0e0d2"></div>
<div class="a" style="left:401px;top:53px;width:1px;height:323px;background:#f2f2de"></div>
<div class="a" style="left:443px;top:53px;width:1px;height:323px;background:#e0e0d2"></div>
<div class="a" style="left:444px;top:53px;width:1px;height:323px;background:#f2f2de"></div>
<div class="a" style="left:491px;top:53px;width:1px;height:323px;background:#e0e0d2"></div>
<div class="a" style="left:492px;top:53px;width:1px;height:323px;background:#f2f2de"></div>
<div class="a" style="left:98px;top:393px;width:500px;height:9px;background:#e3e3e3;border-top:1px solid #d6d6d6;border-bottom:1px solid #d0d0d0"></div>
<div class="a" style="left:107px;top:394px;width:427px;height:7px;background:linear-gradient(#fbfbfb,#f0f0f0);border-left:1px solid #cfcfcf;border-right:1px solid #cfcfcf"></div>
<div class="a" style="left:99px;top:394px;width:8px;height:7px;background:#f7f7f7"></div>
<div class="a" style="left:588px;top:394px;width:9px;height:7px;background:#f7f7f7;border-left:1px solid #dcdcdc"></div>
<svg class="a" style="left:99px;top:394px" width="8" height="7"><path d="M5 1.2L2.6 3.5L5 5.8Z" fill="#333"/></svg>
<svg class="a" style="left:589px;top:394px" width="8" height="7"><path d="M3 1.2L5.4 3.5L3 5.8Z" fill="#333"/></svg>
<div class="a" style="left:98.4px;top:406.3px;width:50px;height:13.3px;border:1px solid #bcbcbc;border-radius:2.5px;background:linear-gradient(#fbfbfb,#efefef)"></div><div class="t" style="left:112.6px;top:408.3px;font-size:6.8px;color:#111;-webkit-text-stroke:0.1px #111;transform:scaleX(0.91);transform-origin:0 0">Style</div>
<svg class="a" style="left:141px;top:410px" width="6" height="5"><path d="M1.3 1.5L3 3.3L4.7 1.5Z" fill="#333"/></svg>
<div class="a" style="left:383.3px;top:406.3px;width:50.5px;height:13.3px;border:1px solid #5ea3e6;border-radius:2.5px;background:linear-gradient(#f4f9fd,#e9f1f8)"></div><div class="t" style="left:383.3px;width:50.5px;text-align:center;top:408.3px;font-size:6.8px;color:#111;-webkit-text-stroke:0.1px #111;transform:scaleX(0.91);transform-origin:50% 0">OK</div>
<div class="a" style="left:438.3px;top:406.3px;width:50px;height:13.3px;border:1px solid #bcbcbc;border-radius:2.5px;background:linear-gradient(#fbfbfb,#efefef)"></div><div class="t" style="left:438.3px;width:50px;text-align:center;top:408.3px;font-size:6.8px;color:#111;-webkit-text-stroke:0.1px #111;transform:scaleX(0.91);transform-origin:50% 0">Cancel</div>
<div class="a" style="left:492.2px;top:406.3px;width:50.6px;height:13.3px;border:1px solid #bcbcbc;border-radius:2.5px;background:linear-gradient(#fbfbfb,#efefef)"></div><div class="t" style="left:492.2px;width:50.6px;text-align:center;top:408.3px;font-size:6.8px;color:#111;-webkit-text-stroke:0.1px #111;transform:scaleX(0.91);transform-origin:50% 0">Apply</div>
<div class="a" style="left:546.9px;top:406.3px;width:50.4px;height:13.3px;border:1px solid #bcbcbc;border-radius:2.5px;background:linear-gradient(#fbfbfb,#efefef)"></div><div class="t" style="left:546.9px;width:50.4px;text-align:center;top:408.3px;font-size:6.8px;color:#111;-webkit-text-stroke:0.1px #111;transform:scaleX(0.91);transform-origin:50% 0">Help</div>
<svg class="a" style="left:432px;top:10px" width="12" height="16"><path d="M1.4 1.4L1.4 11.2L3.4 9.5L5 13.1L6.5 12.4L5.1 9.1L8.8 9Z" fill="#fff" stroke="#4a4a4a" stroke-width="0.85" stroke-linejoin="round"/></svg>
</body></html>
